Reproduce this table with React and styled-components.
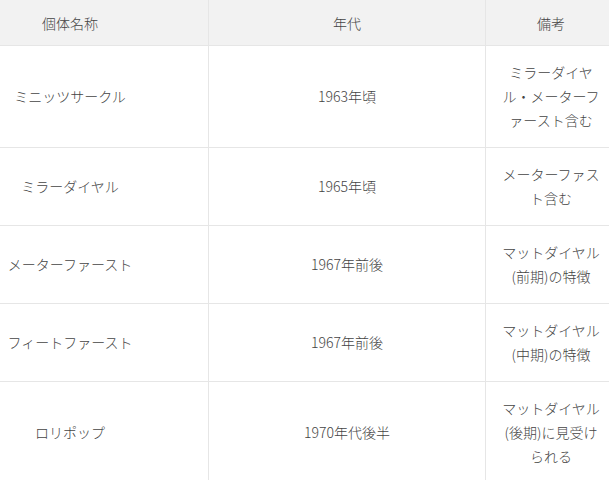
import React from "react";
import styled, { createGlobalStyle } from "styled-components";

const GlobalStyle = createGlobalStyle`
    html, body {
        margin: 0;
        padding: 0;
        background: #ffffff;
        overflow: hidden;
    }
`

const Wrapper = styled.div`
    width: 609px;
    height: 480px;
    overflow: hidden;
    font-family: "Noto Sans CJK JP", "Noto Sans", sans-serif;
    font-weight: 300;
    color: #444444;
`

const Table = styled.table`
    margin-left: -68px;
    border-collapse: collapse;
    table-layout: fixed;
    width: 682px;
`

const HeadCell = styled.th`
    width: ${props => props.$width}px;
    height: 45px;
    padding: 0;
    background-color: #f2f2f2;
    font-weight: 300;
    font-size: 14px;
    line-height: 24px;
    text-align: center;
    border-right: 1px solid #e6e6e6;
    border-bottom: 1px solid #e6e6e6;
`

const Cell = styled.td`
    padding: 14px 0 15px;
    font-size: 14px;
    line-height: 24px;
    text-align: center;
    vertical-align: middle;
    white-space: nowrap;
    border-right: 1px solid #e6e6e6;
    border-bottom: 1px solid #e6e6e6;
`

const rows = [
    { name: "ミニッツサークル", year: "1963年頃", note: ["ミラーダイヤ", "ル・メーターフ", "ァースト含む"] },
    { name: "ミラーダイヤル", year: "1965年頃", note: ["メーターファス", "ト含む"] },
    { name: "メーターファースト", year: "1967年前後", note: ["マットダイヤル", "(前期)の特徴"] },
    { name: "フィートファースト", year: "1967年前後", note: ["マットダイヤル", "(中期)の特徴"] },
    { name: "ロリポップ", year: "1970年代後半", note: ["マットダイヤル", "(後期)に見受け", "られる"] },
]

const App = () => {
    return (
        <Wrapper>
            <GlobalStyle />
            <Table>
                <thead>
                    <tr>
                        <HeadCell $width={276}>個体名称</HeadCell>
                        <HeadCell $width={276}>年代</HeadCell>
                        <HeadCell $width={130}>備考</HeadCell>
                    </tr>
                </thead>
                <tbody>
                    {rows.map(row => (
                        <tr key={row.name}>
                            <Cell>{row.name}</Cell>
                            <Cell>{row.year}</Cell>
                            <Cell>
                                {row.note.map((line, i) => (
                                    <React.Fragment key={i}>
                                        {i > 0 && <br />}
                                        {line}
                                    </React.Fragment>
                                ))}
                            </Cell>
                        </tr>
                    ))}
                </tbody>
            </Table>
        </Wrapper>
    )
}

export default App
